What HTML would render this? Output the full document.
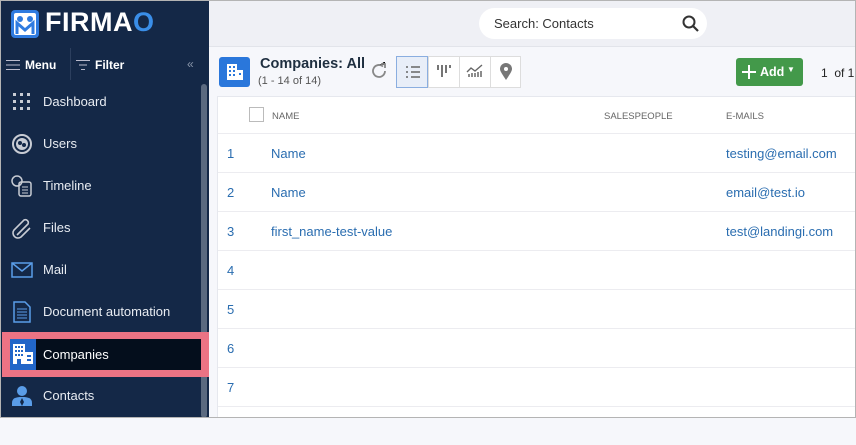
<!DOCTYPE html>
<html><head><style>
*{margin:0;padding:0;box-sizing:border-box}
body{width:856px;height:418px;overflow:hidden;font-family:"Liberation Sans",sans-serif;background:#f6f7fb;position:relative}
.frame{position:absolute;inset:0;border:1px solid #b4b4b4;z-index:50;pointer-events:none}
.sb{position:absolute;left:0;top:0;width:209px;height:418px;background:#142847;color:#fff}
.logo{position:absolute;left:10px;top:9px}
.nav{position:absolute;left:0;width:200px;height:42px;font-size:13px;color:#e8ecf2}
.nav span{position:absolute;left:43px;top:13px}
.nav svg{position:absolute;left:11px;top:10px}
.top{position:absolute;left:209px;top:0;right:0;height:47px;background:#eff0f5;border-bottom:1px solid #e2e4ea}
.search{position:absolute;left:270px;top:8px;width:228px;height:31px;background:#fff;border-radius:16px;font-size:13px;color:#333}
.card{position:absolute;left:217px;top:96px;width:639px;height:322px;background:#fff;border:1px solid #e6e8ee;border-right:none}
.row{position:absolute;left:0;right:0;height:39px;border-top:1px solid #ececf0;font-size:13px;color:#2a6db0}
.row .n{position:absolute;left:9px;top:12px}
.row .a{position:absolute;left:53px;top:12px}
.row .e{position:absolute;left:508px;top:12px}
.th{position:absolute;font-size:9.5px;color:#666;top:14px}
</style></head><body>
<div class="sb">
  <svg class="logo" width="30" height="30" viewBox="0 0 30 30"><rect x="1" y="1" width="28" height="28" rx="4" fill="#2f7be0"/><rect x="4" y="4" width="22" height="22" rx="2" fill="#fff"/><circle cx="10" cy="10" r="3" fill="#2f7be0"/><circle cx="20" cy="10" r="3" fill="#2f7be0"/><path d="M7 25V14l8 7 8-7v11" stroke="#2f7be0" stroke-width="3" fill="none"/></svg>
  <div style="position:absolute;left:45px;top:7px;font-size:27px;font-weight:bold;letter-spacing:0.5px;color:#fff">FIRMA<span style="color:#3a8ee8">O</span></div>
  <svg style="position:absolute;left:6px;top:59px" width="14" height="12"><path d="M0 1.5H14M0 6H14M0 10.5H14" stroke="#bbc" stroke-width="1"/></svg>
  <div style="position:absolute;left:25px;top:58px;font-size:12px;font-weight:bold">Menu</div>
  <div style="position:absolute;left:70px;top:48px;width:1px;height:32px;background:#2c3f5e"></div>
  <svg style="position:absolute;left:76px;top:59px" width="14" height="12"><path d="M0 1.5H14M3 6H11M5 10.5H9" stroke="#bbc" stroke-width="1"/></svg>
  <div style="position:absolute;left:95px;top:58px;font-size:12px;font-weight:bold">Filter</div>
  <div style="position:absolute;left:187px;top:57px;font-size:12px;color:#8a96aa">«</div>
  <div style="position:absolute;left:201px;top:84px;width:6px;height:334px;background:#5b6a80;border-radius:3px"></div>

  <div class="nav" style="top:81px"><svg width="20" height="20"><g fill="#c8ccd4"><rect x="2" y="2" width="3" height="3"/><rect x="9" y="2" width="3" height="3"/><rect x="16" y="2" width="3" height="3"/><rect x="2" y="9" width="3" height="3"/><rect x="9" y="9" width="3" height="3"/><rect x="16" y="9" width="3" height="3"/><rect x="2" y="16" width="3" height="3"/><rect x="9" y="16" width="3" height="3"/><rect x="16" y="16" width="3" height="3"/></g></svg><span>Dashboard</span></div>
  <div class="nav" style="top:123px"><svg width="22" height="22"><circle cx="11" cy="11" r="9" stroke="#c8ccd4" stroke-width="2" fill="none"/><circle cx="11" cy="11" r="6" fill="#c8ccd4"/><circle cx="9" cy="10" r="2" fill="#142847"/><circle cx="13" cy="12" r="2" fill="#142847"/></svg><span>Users</span></div>
  <div class="nav" style="top:165px"><svg width="22" height="22"><circle cx="6" cy="6" r="5" stroke="#c8ccd4" stroke-width="1.5" fill="none"/><rect x="8" y="7" width="12" height="14" rx="2" stroke="#c8ccd4" stroke-width="1.5" fill="none"/><path d="M11 12h6M11 15h6M11 18h6" stroke="#c8ccd4"/></svg><span>Timeline</span></div>
  <div class="nav" style="top:207px"><svg width="22" height="22"><path d="M6 18L17 7a3 3 0 0 0-4-4L3 13a5 5 0 0 0 7 7l9-9" stroke="#c8ccd4" stroke-width="1.6" fill="none"/></svg><span>Files</span></div>
  <div class="nav" style="top:249px"><svg width="22" height="22"><rect x="1" y="4" width="20" height="14" stroke="#5a9de8" stroke-width="1.5" fill="none"/><path d="M1 4l10 8 10-8" stroke="#5a9de8" stroke-width="1.5" fill="none"/></svg><span>Mail</span></div>
  <div class="nav" style="top:291px"><svg width="22" height="22"><path d="M3 1h11l5 5v15H3z" stroke="#5a9de8" stroke-width="1.5" fill="none"/><path d="M6 8h10M6 11h10M6 14h10M6 17h10" stroke="#5a9de8"/></svg><span>Document automation</span></div>
  <div style="position:absolute;left:2px;top:332px;width:207px;height:45px;background:#ec7384"></div>
  <div style="position:absolute;left:10px;top:339px;width:191px;height:31px;background:#040e1c"></div>
  <div style="position:absolute;left:10px;top:339px;width:26px;height:31px;background:#2266c8"></div>
  <svg style="position:absolute;left:12px;top:343px" width="22" height="22"><rect x="1" y="1" width="12" height="20" fill="#fff"/><rect x="13" y="9" width="8" height="12" fill="#fff"/><g fill="#2266c8"><rect x="3" y="3" width="2" height="2"/><rect x="6" y="3" width="2" height="2"/><rect x="9" y="3" width="2" height="2"/><rect x="3" y="7" width="2" height="2"/><rect x="6" y="7" width="2" height="2"/><rect x="9" y="7" width="2" height="2"/><rect x="3" y="11" width="2" height="2"/><rect x="6" y="11" width="2" height="2"/><rect x="9" y="11" width="2" height="2"/><rect x="5" y="16" width="4" height="5"/><rect x="15" y="12" width="4" height="2"/><rect x="15" y="16" width="4" height="2"/></g></svg>
  <div style="position:absolute;left:43px;top:347px;font-size:13px;color:#fff">Companies</div>
  <div class="nav" style="top:375px"><svg width="22" height="22"><circle cx="11" cy="6" r="5" fill="#5a9de8"/><path d="M1 18c0-5 4-6 10-6s10 1 10 6v3H1z" fill="#5a9de8"/><path d="M11 13l-2 4 2 4 2-4z" fill="#142847"/></svg><span>Contacts</span></div>
</div>

<div class="top"><div class="search"><span style="position:absolute;left:15px;top:8px">Search: Contacts</span>
<svg style="position:absolute;left:203px;top:7px" width="17" height="17"><circle cx="7" cy="7" r="5.5" stroke="#333" stroke-width="2" fill="none"/><path d="M11 11l5 5" stroke="#333" stroke-width="2.2"/></svg></div></div>

<div style="position:absolute;left:219px;top:57px;width:31px;height:30px;background:#2a77db;border-radius:3px"></div>
<svg style="position:absolute;left:225px;top:62px" width="20" height="20"><rect x="2" y="2" width="10" height="16" fill="#fff"/><rect x="12" y="8" width="6" height="10" fill="#fff"/><g fill="#2a77db"><rect x="4" y="4" width="2" height="2"/><rect x="8" y="4" width="2" height="2"/><rect x="4" y="8" width="2" height="2"/><rect x="8" y="8" width="2" height="2"/><rect x="4" y="12" width="2" height="2"/><rect x="8" y="12" width="2" height="2"/><rect x="14" y="11" width="2" height="2"/></g></svg>
<div style="position:absolute;left:260px;top:56px;font-size:14.5px;font-weight:bold;color:#1f2f40">Companies: All</div>
<div style="position:absolute;left:258px;top:75px;font-size:11px;color:#555">(1 - 14 of 14)</div>
<svg style="position:absolute;left:370px;top:62px" width="18" height="18"><path d="M15 9a6 6 0 1 1-2-4.5" stroke="#888" stroke-width="1.8" fill="none"/><path d="M10 3h5V-1" stroke="none"/><path d="M11 2l4 0 0 4" stroke="#888" stroke-width="1.8" fill="none"/></svg>
<div style="position:absolute;left:396px;top:56px;width:125px;height:32px;border:1px solid #ddd;background:#fff"></div>
<div style="position:absolute;left:396px;top:56px;width:32px;height:32px;border:1px solid #8aaee0;background:#e8eef8"></div>
<div style="position:absolute;left:428px;top:56px;width:1px;height:32px;background:#ddd"></div>
<div style="position:absolute;left:459px;top:56px;width:1px;height:32px;background:#ddd"></div>
<div style="position:absolute;left:490px;top:56px;width:1px;height:32px;background:#ddd"></div>
<svg style="position:absolute;left:405px;top:65px" width="16" height="14"><path d="M1 2h2M6 2h9M1 7h2M6 7h9M1 12h2M6 12h9" stroke="#666" stroke-width="1.4"/></svg>
<svg style="position:absolute;left:436px;top:64px" width="16" height="14"><path d="M2 1v5M6 1v12M10 1v8M14 1v3" stroke="#666" stroke-width="1.8"/></svg>
<svg style="position:absolute;left:466px;top:64px" width="18" height="14"><path d="M1 8l4-4 4 3 7-6" stroke="#666" stroke-width="1.4" fill="none"/><path d="M3 13v-3M6 13v-4M9 13v-4M12 13v-5M15 13v-6" stroke="#666" stroke-width="1.5"/></svg>
<svg style="position:absolute;left:499px;top:63px" width="14" height="18"><path d="M7 17C3 11 1 8 1 6a6 6 0 0 1 12 0c0 2-2 5-6 11z" fill="#777"/><circle cx="7" cy="6" r="2" fill="#fff"/></svg>

<div style="position:absolute;left:736px;top:58px;width:67px;height:28px;background:#43994a;border-radius:3px;color:#fff;font-size:12.5px;font-weight:bold">
<svg style="position:absolute;left:5px;top:6px" width="16" height="16"><path d="M8 1v14M1 8h14" stroke="#fff" stroke-width="2"/></svg>
<span style="position:absolute;left:24px;top:7px">Add</span><span style="position:absolute;left:51px;top:7px;font-size:8px">▼</span></div>
<div style="position:absolute;left:821px;top:66px;font-size:12px;color:#222">1&nbsp; of 1</div>

<div class="card">
  <div style="position:absolute;left:31px;top:10px;width:15px;height:15px;border:1px solid #bbb;background:#fff"></div>
  <div class="th" style="left:54px">NAME</div>
  <div class="th" style="left:386px">SALESPEOPLE</div>
  <div class="th" style="left:508px">E-MAILS</div>
  <div class="row" style="top:36px"><span class="n">1</span><span class="a">Name</span><span class="e">testing@email.com</span></div>
  <div class="row" style="top:75px"><span class="n">2</span><span class="a">Name</span><span class="e">email@test.io</span></div>
  <div class="row" style="top:114px"><span class="n">3</span><span class="a">first_name-test-value</span><span class="e">test@landingi.com</span></div>
  <div class="row" style="top:153px"><span class="n">4</span></div>
  <div class="row" style="top:192px"><span class="n">5</span></div>
  <div class="row" style="top:231px"><span class="n">6</span></div>
  <div class="row" style="top:270px"><span class="n">7</span></div>
  <div class="row" style="top:309px"></div>
</div>
<div class="frame"></div>
</body></html>
